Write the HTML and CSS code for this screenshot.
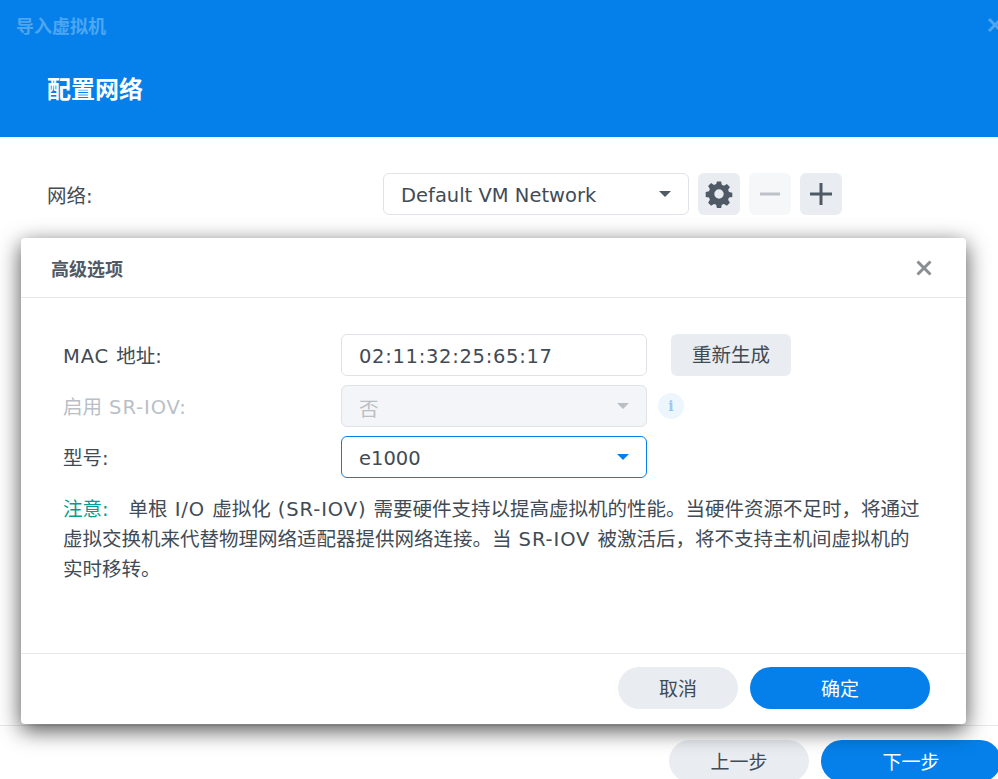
FILE: index.html
```html
<!DOCTYPE html>
<html>
<head>
    <meta charset="UTF-8">
    <title>导入虚拟机</title>
    <link rel="stylesheet" href="styles.css">
</head>
<body>
    <div class="wizard">
        <div class="wizard-header">
            <div class="wizard-title-row">
                <span class="wizard-title">导入虚拟机</span>
                <svg class="wizard-close" width="16" height="16" viewBox="0 0 16 16"><path d="M2 2l12 12M14 2L2 14" stroke="currentColor" stroke-width="3" fill="none"/></svg>
            </div>
            <h1>配置网络</h1>
        </div>

        <div class="wizard-body">
            <div class="network-row">
                <label class="network-label">网络:</label>
                <div class="select network-select">
                    <span class="value">Default VM Network</span>
                    <span class="caret"></span>
                </div>
                <button class="icon-btn">
                    <svg width="28" height="28" viewBox="0 0 28 28"><path fill="#4f5a66" fill-rule="evenodd" d="M11.9 1.5h4.2l.7 3.3 2.2.9 2.9-1.8 3 3-1.8 2.9.9 2.2 3.3.7v4.2l-3.3.7-.9 2.2 1.8 2.9-3 3-2.9-1.8-2.2.9-.7 3.3h-4.200l-.7-3.300-2.200-.9-2.900 1.800-3-3 1.800-2.900-.9-2.200-3.300-.7V11.900l3.300-.7.9-2.200-1.800-2.900 3-3 2.900 1.800 2.200-.9zM14 9.300a4.700 4.700 0 1 0 0 9.400 4.700 4.700 0 0 0 0-9.400z"/></svg>
                </button>
                <button class="icon-btn disabled">
                    <svg width="20" height="20" viewBox="0 0 20 20"><path d="M0 10h20" stroke="#bcc2c8" stroke-width="3"/></svg>
                </button>
                <button class="icon-btn">
                    <svg width="22" height="22" viewBox="0 0 22 22"><path d="M0 11h22M11 0v22" stroke="#4f5a66" stroke-width="3"/></svg>
                </button>
            </div>
        </div>

        <div class="wizard-footer">
            <button class="pill secondary">上一步</button>
            <button class="pill primary wide">下一步</button>
        </div>
    </div>

    <div class="dialog">
        <div class="dialog-header">
            <span class="dialog-title">高级选项</span>
            <svg class="dialog-close" width="16" height="16" viewBox="0 0 16 16"><path d="M1.500 1.500l13 13M14.500 1.500l-13 13" stroke="#8a8f94" stroke-width="3" fill="none"/></svg>
        </div>

        <div class="dialog-body">
            <div class="form-row">
                <label><span class="latin">MAC </span>地址:</label>
                <div class="input"><span class="value">02:11:32:25:65:17</span></div>
                <button class="regen-btn">重新生成</button>
            </div>
            <div class="form-row">
                <label class="muted">启用<span class="latin"> SR-IOV:</span></label>
                <div class="select is-disabled">
                    <span class="value">否</span>
                    <span class="caret"></span>
                </div>
                <span class="info-badge">i</span>
            </div>
            <div class="form-row">
                <label>型号:</label>
                <div class="select is-focused">
                    <span class="value">e1000</span>
                    <span class="caret"></span>
                </div>
            </div>
            <p class="note"><span class="note-tag">注意:</span>单根<span class="latin"> I/O </span>虚拟化<span class="latin"> (SR-IOV) </span>需要硬件支持以提高虚拟机的性能。当硬件资源不足时，将通过<br>虚拟交换机来代替物理网络适配器提供网络连接。当<span class="latin"> SR-IOV </span>被激活后，将不支持主机间虚拟机的<br>实时移转。</p>
        </div>

        <div class="dialog-footer">
            <button class="pill secondary">取消</button>
            <button class="pill primary wide">确定</button>
        </div>
    </div>
</body>
</html>
```

FILE: styles.css
```css
html, body {
    height: 100%;
}

body {
    margin: 0;
    overflow: hidden;
    background-color: #fff;
    color: #414b55;
    font-family: "DejaVu Sans", "Noto Sans CJK SC", sans-serif;
    font-size: 19.5px;
}

button {
    font-family: inherit;
    border: none;
    padding: 0;
}

.latin {
    letter-spacing: 0.9px;
}

.wizard {
    display: flex;
    flex-direction: column;
    height: 779px;
}

.wizard-header {
    height: 137px;
    box-sizing: border-box;
    background-color: #0580ea;
    color: #fff;
    padding: 11px 0 0 47px;
}

.wizard-title-row {
    display: flex;
    justify-content: space-between;
    align-items: center;
    margin-left: -31px;
    margin-right: -5px;
    height: 28px;
}

.wizard-title {
    font-size: 18px;
    font-weight: 700;
    color: #4da6f1;
}

.wizard-close {
    color: #4da6f1;
}

.wizard-header h1 {
    margin: 34px 0 0;
    font-size: 24px;
    line-height: 34px;
    font-weight: 700;
}

.wizard-body {
    flex: 1;
    padding: 36px 0 0 47px;
}

.network-row {
    display: flex;
    align-items: center;
}

.network-label {
    width: 336px;
}

.network-select {
    width: 306px;
    margin-right: 9px;
}

.select,
.input {
    height: 42px;
    box-sizing: border-box;
    display: flex;
    align-items: center;
    justify-content: space-between;
    padding: 0 17px;
    border: 1px solid #dfe3e7;
    border-radius: 6px;
    background-color: #fff;
}

.value {
    padding-top: 2px;
}

.input {
    width: 306px;
    letter-spacing: 0.7px;
}

.caret {
    width: 0;
    height: 0;
    border-left: 6.500px solid transparent;
    border-right: 6.500px solid transparent;
    border-top: 6.500px solid #4f5a66;
}

.icon-btn {
    width: 42px;
    height: 42px;
    margin-right: 9px;
    border-radius: 6px;
    background-color: #e9edf1;
    display: flex;
    align-items: center;
    justify-content: center;
}

.icon-btn.disabled {
    background-color: #f5f7f9;
}

.wizard-footer {
    height: 54px;
    box-sizing: border-box;
    border-top: 1px solid #e6e9ec;
    display: flex;
    justify-content: flex-end;
    gap: 12px;
    padding-top: 14px;
    margin-right: -3px;
}

.wizard-footer .pill.secondary {
    width: 140px;
}

.pill {
    height: 42px;
    width: 120px;
    padding-bottom: 2px;
    border-radius: 21px;
    font-size: 19px;
    flex-shrink: 0;
}

.pill.secondary {
    background-color: #e9edf1;
    color: #414b55;
}

.pill.primary {
    background-color: #0580ea;
    color: #fff;
}

.pill.wide {
    width: 180px;
}

/* overlay dialog */
.dialog {
    position: absolute;
    left: 21px;
    top: 238px;
    width: 945px;
    height: 486px;
    display: flex;
    flex-direction: column;
    background-color: #fff;
    border-radius: 4px;
    box-shadow: 0 6px 22px rgba(0, 0, 0, 0.7);
}

.dialog-header {
    height: 59px;
    flex-shrink: 0;
    display: flex;
    align-items: center;
    justify-content: space-between;
    padding: 0 34px 0 30px;
    border-bottom: 1px solid #e6e9ec;
}

.dialog-title {
    font-size: 18px;
    font-weight: 700;
    color: #4f5a66;
}

.dialog-body {
    flex: 1;
    padding: 36px 42px 0;
}

.form-row {
    display: flex;
    align-items: center;
    margin-bottom: 9px;
}

.form-row label {
    width: 278px;
    padding-bottom: 2px;
}

.form-row .select {
    width: 306px;
}

.muted {
    color: #b9bfc5;
}

.regen-btn {
    width: 120px;
    height: 42px;
    margin-left: 24px;
    padding-bottom: 3px;
    border-radius: 6px;
    background-color: #e9edf1;
    color: #414b55;
    font-size: 19.5px;
}

.select.is-disabled {
    background-color: #f3f5f8;
    color: #b9bfc5;
}

.select.is-disabled .caret {
    border-top-color: #b9bfc5;
}

.select.is-focused {
    border-color: #0580ea;
}

.select.is-focused .caret {
    border-top-color: #0580ea;
}

.info-badge {
    width: 26px;
    height: 26px;
    margin-left: 11px;
    border-radius: 50%;
    background-color: #eef6fd;
    color: #9cc8f0;
    font-family: "DejaVu Serif", serif;
    font-size: 14px;
    font-weight: 700;
    line-height: 26px;
    text-align: center;
}

.note {
    margin: 17px 0 0;
    line-height: 30px;
}

.note-tag {
    color: #0a9a8e;
    margin-right: 20px;
}

.dialog-footer {
    height: 71px;
    flex-shrink: 0;
    box-sizing: border-box;
    border-top: 1px solid #e6e9ec;
    display: flex;
    justify-content: flex-end;
    gap: 12px;
    padding: 13px 36px 0 0;
}
```
